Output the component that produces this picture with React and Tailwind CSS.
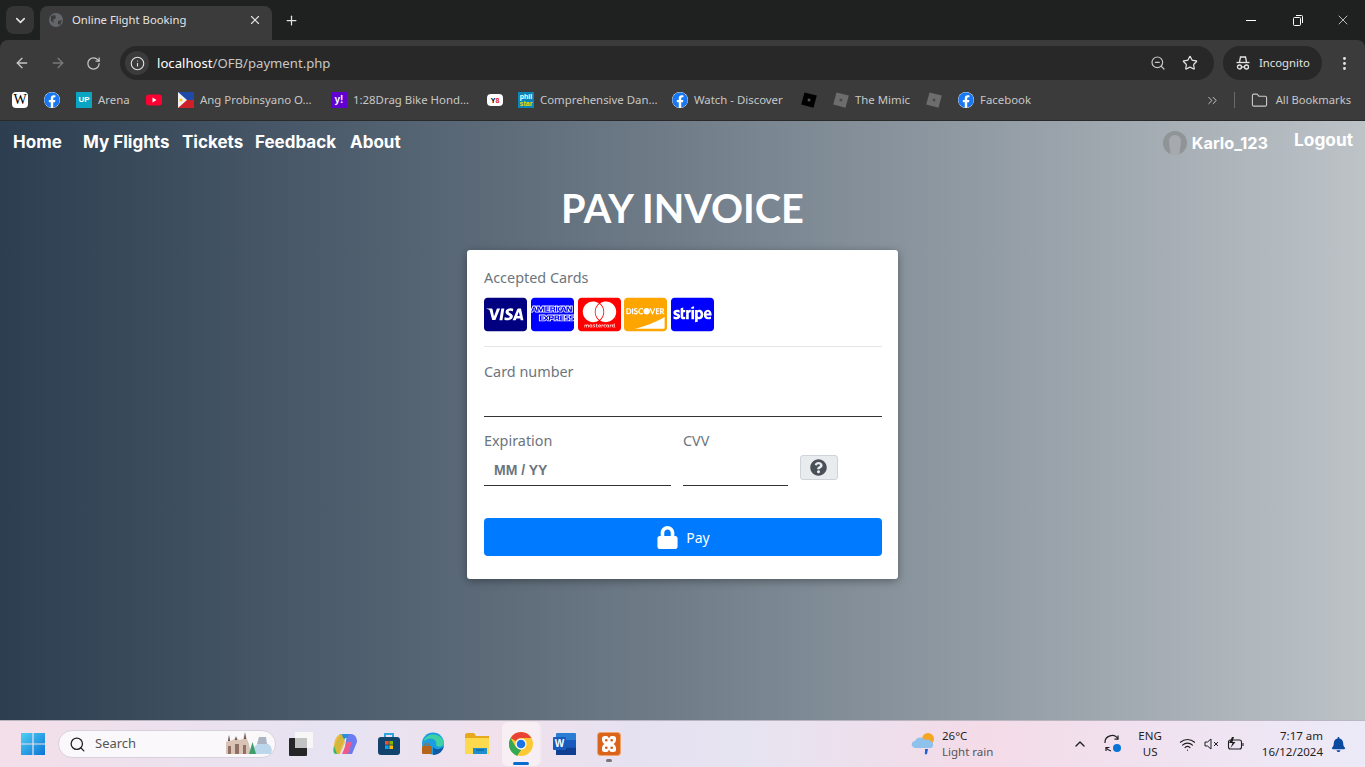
import {
  ArrowLeft,
  ArrowRight,
  ChevronDown,
  ChevronUp,
  ChevronsRight,
  EllipsisVertical,
  Folder,
  Info,
  Plus,
  RotateCw,
  Search,
  Star,
  Wifi,
  X,
  ZoomOut,
} from "lucide-react";
import {
  FaBell,
  FaCcAmex,
  FaCcDiscover,
  FaCcMastercard,
  FaCcStripe,
  FaCcVisa,
  FaFacebook,
  FaLock,
  FaQuestionCircle,
} from "react-icons/fa";

const uiFont = "font-['Noto_Sans','Open_Sans',sans-serif]";

/* ---------- browser chrome ---------- */

const Favicon = ({ type }) => {
  if (type === "wiki")
    return (
      <div className="flex h-4 w-4 items-center justify-center rounded-sm bg-white font-['Liberation_Serif',serif] text-[14px] leading-none text-black">
        W
      </div>
    );
  if (type === "fb") return <FaFacebook className="h-4 w-4 rounded-full bg-white text-[#1877f2]" />;
  if (type === "up")
    return (
      <div className="flex h-4 w-4 items-center justify-center bg-[#0aa5c0] font-['Liberation_Sans',sans-serif] text-[8px] font-bold leading-none text-white">
        UP
      </div>
    );
  if (type === "yt")
    return (
      <svg viewBox="0 0 16 16" className="h-4 w-4">
        <rect y="2.5" width="16" height="11" rx="3" fill="#ff0033" />
        <path d="M6.5 5.5 L10.5 8 L6.5 10.5 Z" fill="#fff" />
      </svg>
    );
  if (type === "ph")
    return (
      <svg viewBox="0 0 16 16" className="h-4 w-4">
        <rect width="16" height="8" fill="#1f4aa8" />
        <rect y="8" width="16" height="8" fill="#ce2028" />
        <path d="M0 0 L9 8 L0 16 Z" fill="#f2f2f2" />
        <circle cx="3" cy="8" r="1.5" fill="#f5c518" />
      </svg>
    );
  if (type === "yahoo")
    return (
      <div className="flex h-4 w-4 items-center justify-center bg-[#6001d2] font-['Liberation_Sans',sans-serif] text-[10px] font-bold leading-none text-white">
        y!
      </div>
    );
  if (type === "v8")
    return (
      <div className="flex h-3 w-4 items-center justify-center rounded-sm bg-white font-['Liberation_Sans',sans-serif] text-[7px] font-bold leading-none text-black">
        Y<span className="text-[#e01b24]">8</span>
      </div>
    );
  if (type === "phil")
    return (
      <div className="flex h-4 w-4 flex-col items-center justify-center bg-[#0b84b8] font-['Liberation_Sans',sans-serif] text-[7px] font-bold leading-[7px]">
        <span className="text-white">phil</span>
        <span className="text-[#f6d30b]">star</span>
      </div>
    );
  if (type === "roblox")
    return (
      <svg viewBox="0 0 16 16" className="h-4 w-4">
        <path d="M3.5 0.5 L15.8 3.5 L12.5 15.8 L0.2 12.5 Z" fill="#000" />
        <rect x="6.7" y="6.7" width="2.6" height="2.6" fill="#555" />
      </svg>
    );
  return (
    <svg viewBox="0 0 16 16" className="h-4 w-4">
      <path d="M3.5 0.5 L15.8 3.5 L12.5 15.8 L0.2 12.5 Z" fill="#6d6d6d" />
      <rect x="6.7" y="6.7" width="2.6" height="2.6" fill="#4a4a4a" />
    </svg>
  );
};

const bookmarks = [
  { icon: "wiki", width: "w-8" },
  { icon: "fb", width: "w-8" },
  { icon: "up", label: "Arena", width: "w-[70px]" },
  { icon: "yt", width: "w-8" },
  { icon: "ph", label: "Ang Probinsyano O...", width: "w-[153px]" },
  { icon: "yahoo", label: "1:28Drag Bike Hond...", width: "w-[156px]" },
  { icon: "v8", width: "w-[31px]" },
  { icon: "phil", label: "Comprehensive Dan...", width: "w-[154px]" },
  { icon: "fb", label: "Watch - Discover", width: "w-[129px]" },
  { icon: "roblox", width: "w-8" },
  { icon: "gray", label: "The Mimic", width: "w-[93px]" },
  { icon: "gray", width: "w-8" },
  { icon: "fb", label: "Facebook", width: "w-[93px]" },
];

const TabStrip = () => (
  <div className="flex h-10 shrink-0 items-start bg-[#1f2120] pl-[6px] pt-[6px] text-[#e3e3e3]">
    <div className="flex h-7 w-7 items-center justify-center rounded-lg bg-[#353535]">
      <ChevronDown size={15} strokeWidth={2.5} />
    </div>
    <div className="ml-[6px] flex h-[34px] w-[232px] items-start rounded-t-lg bg-[#3b3b3b] pl-2 pr-[10px] pt-[6px]">
      <svg viewBox="0 0 16 16" className="h-4 w-4 shrink-0">
        <circle cx="8" cy="8" r="7" fill="#63666a" />
        <path d="M3 4 L7 3 L8 6 L5 8 L6 11 L3 9 Z M10 9 L14 8 L12 13 L10 12 Z" fill="#3b3b3b" />
      </svg>
      <span className="ml-2 flex-1 text-[11.3px] leading-4 text-[#e3e3e3]">Online Flight Booking</span>
      <X size={14} strokeWidth={2} className="mt-[1px]" />
    </div>
    <div className="ml-[12px] flex h-7 items-center">
      <Plus size={15} strokeWidth={2} />
    </div>
    <div className="ml-auto mt-[-6px] flex h-10 items-center">
      <div className="flex w-[46px] justify-center">
        <div className="h-px w-[10px] bg-white" />
      </div>
      <div className="flex w-[47px] justify-center">
        <svg viewBox="0 0 12 12" className="h-3 w-3" fill="none" stroke="#fff" strokeWidth="1">
          <rect x="1.5" y="3.5" width="7" height="8" rx="1" />
          <path d="M4 1.5 H9.5 A1 1 0 0 1 10.5 2.5 V9" />
        </svg>
      </div>
      <div className="flex w-[44px] justify-center">
        <X size={16} strokeWidth={1.2} />
      </div>
    </div>
  </div>
);

const IncognitoIcon = () => (
  <svg viewBox="0 0 16 16" className="h-4 w-4" fill="none" stroke="#e3e3e3" strokeWidth="1.3">
    <path d="M4.5 7 L5.5 2 H10.5 L11.5 7" />
    <path d="M1.5 7.5 H14.5" />
    <circle cx="4.5" cy="12" r="2" />
    <circle cx="11.5" cy="12" r="2" />
    <path d="M6.5 12 H9.5" />
  </svg>
);

const Toolbar = () => (
  <div className="flex h-10 shrink-0 items-center rounded-t-lg bg-[#3b3b3b] pt-[6px] text-[#c7c7c7]">
    <div className="flex w-[120px] shrink-0 items-center pl-[14px]">
      <ArrowLeft size={16} strokeWidth={2} />
      <ArrowRight size={16} strokeWidth={2} className="ml-5 text-[#7a7a7a]" />
      <RotateCw size={15} strokeWidth={2} className="ml-[20px]" />
    </div>
    <div className="flex h-[34px] w-[1094px] shrink-0 items-center rounded-full bg-[#282828] pl-[5px] pr-[16px]">
      <div className="flex h-6 w-6 items-center justify-center rounded-full bg-[#3b3b3b]">
        <Info size={15} strokeWidth={1.8} className="text-[#e3e3e3]" />
      </div>
      <span className="ml-2 mt-[2px] flex-1 text-[13.15px] text-[#c7c7c7]">
        <span className="text-white">localhost</span>/OFB/payment.php
      </span>
      <ZoomOut size={16} strokeWidth={1.8} />
      <Star size={16} strokeWidth={1.8} className="ml-4 text-[#e3e3e3]" />
    </div>
    <div className="ml-[9px] flex h-[34px] w-[99px] shrink-0 items-center rounded-full bg-[#282828] pl-[12px]">
      <IncognitoIcon />
      <span className="ml-2 text-[11.3px] text-[#e3e3e3]">Incognito</span>
    </div>
    <EllipsisVertical size={17} strokeWidth={2.2} className="ml-[14px] text-[#e3e3e3]" />
  </div>
);

const BookmarksBar = () => (
  <div className="flex h-[41px] shrink-0 items-center border-b border-[#2a2a2a] bg-[#3b3b3b] pl-3 text-[11.4px] text-[#c7c7c7]">
    {bookmarks.map((item, i) => (
      <div key={i} className={`flex shrink-0 items-center gap-[6px] ${item.width}`}>
        <Favicon type={item.icon} />
        {item.label && <span className="whitespace-nowrap">{item.label}</span>}
      </div>
    ))}
    <div className="ml-auto flex items-center pr-[14px]">
      <ChevronsRight size={15} strokeWidth={1.6} />
      <div className="ml-[14px] h-4 w-px bg-[#6a6a6a]" />
      <Folder size={17} strokeWidth={1.6} className="ml-4" />
      <span className="ml-2 whitespace-nowrap text-[11.2px]">All Bookmarks</span>
    </div>
  </div>
);

/* ---------- page ---------- */

const NavBar = () => (
  <nav className="flex h-[44px] items-center pl-[13px] pr-3 font-['Inter',sans-serif] text-[17px] font-bold text-white">
    <a className="w-[50px]">Home</a>
    <a className="ml-5 w-[87px]">My Flights</a>
    <a className="ml-3 w-[60px] whitespace-nowrap">Tickets</a>
    <a className="ml-[13px] w-[82px]">Feedback</a>
    <a className="ml-[13px]">About</a>
    <div className="ml-auto flex items-center">
      <svg viewBox="0 0 24 24" className="h-6 w-6">
        <circle cx="12" cy="12" r="12" fill="#8f9497" />
        <circle cx="12" cy="10" r="6" fill="#a6aaae" />
        <path d="M6 10 C6 16 8 18 7 24 H17 C16 18 18 16 18 10 Z" fill="#a6aaae" />
      </svg>
      <span className="ml-[5px] text-[16.3px]">Karlo_123</span>
      <span className="ml-[26px] mb-[6px] text-[17.3px]">Logout</span>
    </div>
  </nav>
);

const cardIcons = [
  { Icon: FaCcVisa, color: "text-[#000080]" },
  { Icon: FaCcAmex, color: "text-[#0000ff]" },
  { Icon: FaCcMastercard, color: "text-[#ff0000]" },
  { Icon: FaCcDiscover, color: "text-[#ffa500]" },
  { Icon: FaCcStripe, color: "text-[#0000ff]" },
];

const PaymentCard = () => (
  <div className="mx-auto mt-[18px] w-[431px] rounded-[3px] bg-white pb-[23px] pl-[17px] pr-4 pt-[17px] text-[14.4px] text-[#6c757d] shadow-[0_2px_8px_rgba(0,0,0,0.35)]">
    <p className="leading-[22px]">Accepted Cards</p>
    <div className="mt-[6px] flex h-[38px] items-center gap-[3.75px]">
      {cardIcons.map(({ Icon, color }, i) => (
        <Icon key={i} size={43} className={`shrink-0 ${color}`} />
      ))}
    </div>
    <hr className="mt-[13px] border-[#e5e7ea]" />
    <p className="mt-[14px] leading-[22px]">Card number</p>
    <div className="mt-[33px] border-b border-[#333]" />

    <div className="mt-[13px] flex items-start">
      <div className="w-[187px]">
        <p className="leading-[22px]">Expiration</p>
        <div className="h-[34px] border-b border-[#333] pl-[10px] pt-2 font-['Liberation_Sans',sans-serif] text-sm font-bold leading-5 text-[#6c757d]">
          MM / YY
        </div>
      </div>
      <div className="ml-3 w-[105px]">
        <p className="leading-[22px]">CVV</p>
        <div className="h-[34px] border-b border-[#333]" />
      </div>
      <button
        type="button"
        className="ml-3 mt-[25px] flex h-[25px] w-[38px] items-center justify-center rounded-[3px] border border-[#ced4da] bg-[#e9ecef] pr-[2px] text-[#495057]"
      >
        <FaQuestionCircle size={17} />
      </button>
    </div>

    <button
      type="button"
      className="mt-8 flex h-[38px] w-full items-center justify-center gap-[7px] rounded bg-[#007bff] text-[14px] text-white"
    >
      <FaLock size={23} />
      <span>Pay</span>
    </button>
  </div>
);

/* ---------- taskbar ---------- */

const WindowsLogo = () => (
  <svg viewBox="0 0 24 24" className="h-6 w-6">
    <defs>
      <linearGradient id="win" x1="0" y1="0" x2="1" y2="1">
        <stop offset="0" stopColor="#4fd0f5" />
        <stop offset="1" stopColor="#0a74d6" />
      </linearGradient>
    </defs>
    <path d="M0 1 H11.4 V11.4 H0 Z M12.6 1 H24 V11.4 H12.6 Z M0 12.6 H11.4 V23 H0 Z M12.6 12.6 H24 V23 H12.6 Z" fill="url(#win)" />
  </svg>
);

const SearchArt = () => (
  <svg viewBox="0 0 48 24" className="h-6 w-12">
    <path d="M1 22 V10 L3 9 L4 3 L5 9 L8 8 L11 5 L14 8 L18 7 L20 1 L22 7 L24 12 L26 22 Z" fill="#d9c3b4" />
    <path d="M3 9 L4 3 L5 9 Z M10 8 L11 4 L12 8 Z M19 7 L20 0 L21 7 Z" fill="#5d4a4a" />
    <path d="M3 22 V14 H6 V22 Z M10 22 V12 H14 V22 Z M18 22 V13 H21 V22 Z" fill="#8f6f66" />
    <path d="M28 22 C27 14 33 10 40 11 C46 12 48 17 46 22 Z" fill="#bcd7ec" />
    <path d="M32 12 L34 5 H41 L42 12 Z" fill="#aab4c2" />
    <path d="M28 22 L24 22 L27.5 10 L31 22 Z" fill="#3f9c6b" />
  </svg>
);

const TaskView = () => (
  <svg viewBox="0 0 24 24" className="h-6 w-6">
    <rect x="0" y="6" width="18" height="18" rx="1" fill="#262626" />
    <rect x="6" y="0" width="18" height="16" rx="1" fill="#f7f7f7" />
    <rect x="6" y="6" width="12" height="10" fill="#c2c2c2" />
  </svg>
);

const Copilot = () => (
  <svg viewBox="0 0 24 24" className="h-6 w-6">
    <path d="M7 2 H14 L9 13 L6 22 H3 C0 22 0 18 1 14 Z" fill="#37b36f" />
    <path d="M1 14 C1 8 4 2 9 2 L12 10 L7 22 H4 Z" fill="#f2b632" opacity="0.85" />
    <path d="M14 2 H18 C22 2 24 6 24 10 L19 22 H11 Z" fill="#6d7bf0" />
    <path d="M9 22 L14 10 H19 L15 22 Z" fill="#ee5a8a" />
    <path d="M9 2 H16 L14 6 H10 Z" fill="#2b8fe0" />
  </svg>
);

const StoreIcon = () => (
  <svg viewBox="0 0 24 24" className="h-6 w-6">
    <path d="M8 6 V2 H16 V6" fill="none" stroke="#2fa5e0" strokeWidth="2" />
    <rect x="1" y="5" width="22" height="18" rx="3" fill="#12436d" />
    <rect x="8" y="9" width="3.6" height="3.6" fill="#f25022" />
    <rect x="12.4" y="9" width="3.6" height="3.6" fill="#7fba00" />
    <rect x="8" y="13.4" width="3.6" height="3.6" fill="#00a4ef" />
    <rect x="12.4" y="13.4" width="3.6" height="3.6" fill="#ffb900" />
  </svg>
);

const EdgeIcon = () => (
  <svg viewBox="0 0 24 24" className="h-6 w-6">
    <circle cx="12" cy="11.5" r="11" fill="#1b9de2" />
    <path d="M3 8 C6 1 19 0 23 10 C23 15 17 16 15 13 C17 9 11 5 7 7 C4 8 3 10 3 8 Z" fill="#3fd0a4" />
    <path d="M12 23 C18 23 22 19 23 14 C20 18 14 18 12 15 Z" fill="#0c59a4" />
    <rect x="1" y="14" width="10" height="8" rx="1" fill="#b6651c" />
    <rect x="4" y="12" width="4" height="3" fill="none" stroke="#b6651c" strokeWidth="1" />
  </svg>
);

const FilesIcon = () => (
  <svg viewBox="0 0 24 24" className="h-6 w-6">
    <path d="M0 3 C0 2 1 1 2 1 H9 L11 4 H24 V22 H0 Z" fill="#e7a91c" />
    <rect x="0" y="6" width="24" height="16" rx="1" fill="#fdd94e" />
    <rect x="8" y="16" width="14" height="6" fill="#1f8fd0" />
    <rect x="11" y="17.5" width="8" height="1.2" fill="#0c5f99" />
  </svg>
);

const ChromeIcon = () => (
  <svg viewBox="0 0 24 24" className="h-6 w-6">
    <circle cx="12" cy="12" r="12" fill="#fcc934" />
    <path d="M12 0 A12 12 0 0 1 22.4 6 H12 A6 6 0 0 0 6.8 9 L1.6 6 A12 12 0 0 1 12 0 Z" fill="#ea4335" />
    <path d="M1.6 6 L6.8 15 A6 6 0 0 0 12 18 L6.8 23 A12 12 0 0 1 1.6 6 Z" fill="#34a853" />
    <path d="M6.8 15 L12 18 L8 24 L5 22 Z" fill="#34a853" />
    <circle cx="12" cy="12" r="5.5" fill="#fff" />
    <circle cx="12" cy="12" r="4.3" fill="#1a73e8" />
  </svg>
);

const WordIcon = () => (
  <div className="relative h-6 w-6">
    <svg viewBox="0 0 24 24" className="h-6 w-6">
      <rect x="3" y="1" width="20" height="22" rx="1" fill="#2b7cd3" />
      <rect x="3" y="8" width="20" height="7.5" fill="#185abd" />
      <rect x="3" y="15.5" width="20" height="7.5" fill="#103f91" />
    </svg>
    <span className="absolute left-0 top-[5px] flex h-[13px] w-[13px] items-center justify-center rounded-[1px] bg-[#185abd] font-['Liberation_Sans',sans-serif] text-[10px] font-bold leading-none text-white">
      W
    </span>
  </div>
);

const XamppIcon = () => (
  <svg viewBox="0 0 24 24" className="h-6 w-6">
    <rect x="0.5" y="0.5" width="23" height="23" rx="3" fill="#d9641a" stroke="#f2a36a" strokeWidth="1" />
    <path d="M5 6.5 A2.5 2.5 0 0 1 7.5 4 H9.5 C11 4 11.5 5.5 12 6.5 C12.5 5.5 13 4 14.5 4 H16.5 A2.5 2.5 0 0 1 19 6.5 V8 C19 9.5 18 11 16.5 12 C18 13 19 14.5 19 16 V17.5 A2.5 2.5 0 0 1 16.5 20 H14.5 C13 20 12.5 18.5 12 17.5 C11.5 18.5 11 20 9.5 20 H7.5 A2.5 2.5 0 0 1 5 17.5 V16 C5 14.5 6 13 7.5 12 C6 11 5 9.5 5 8 Z" fill="#fff" />
    <rect x="8" y="7" width="2.6" height="2.6" rx="1" fill="#d9641a" />
    <rect x="13.4" y="7" width="2.6" height="2.6" rx="1" fill="#d9641a" />
    <rect x="8" y="14.4" width="2.6" height="2.6" rx="1" fill="#d9641a" />
    <rect x="13.4" y="14.4" width="2.6" height="2.6" rx="1" fill="#d9641a" />
  </svg>
);

const WeatherIcon = () => (
  <svg viewBox="0 0 26 24" className="h-6 w-[26px]">
    <circle cx="18" cy="7" r="6" fill="#f5a623" />
    <path d="M6 16 C1 16 0 10 5 9 C7 4 14 5 15 8 C20 7 24 10 23 14 C22 16 21 16 20 16 Z" fill="#8ec1ec" />
    <path d="M15 17 H18 L17 22 C16 23 14 22 15 20 Z" fill="#1f5fd0" />
  </svg>
);

const SyncIcon = () => (
  <svg viewBox="0 0 20 20" className="h-5 w-5" fill="none" stroke="#1f1f1f" strokeWidth="1.2">
    <path d="M2 9 A7 7 0 0 1 15 5" />
    <path d="M15 1.5 V5.2 H11.5" />
    <path d="M3 17 V13.5 H6.5" />
    <path d="M3 13.5 A7 7 0 0 0 8 17" />
    <circle cx="14" cy="14" r="4" fill="#0a74d6" stroke="none" />
  </svg>
);

const MuteIcon = () => (
  <svg viewBox="0 0 16 16" className="h-4 w-4" fill="none" stroke="#1f1f1f" strokeWidth="1">
    <path d="M1 6 H3.5 L7 3 V13 L3.5 10 H1 Z" />
    <path d="M10 6 L14 10 M14 6 L10 10" />
  </svg>
);

const BatteryIcon = () => (
  <svg viewBox="0 0 18 16" className="h-4 w-[18px]" fill="none" stroke="#1f1f1f" strokeWidth="1.1">
    <rect x="1.5" y="4" width="13" height="9" rx="2" />
    <path d="M16 7 V10" />
    <path d="M5 1 L2 7 H5.5 L3.5 12 L8.5 6 H5.5 L7 1 Z" fill="#1f1f1f" stroke="none" />
  </svg>
);

const taskIcons = [TaskView, Copilot, StoreIcon, EdgeIcon, FilesIcon];

const Taskbar = () => (
  <div className="flex h-[47px] shrink-0 items-center border-t border-[#b9b6c2] bg-[linear-gradient(90deg,#f3dfe9_0%,#e6e3f2_25%,#f1e1ec_37%,#e6e1f1_46%,#e7e4f1_55%,#f4dbe8_72%,#eceaf8_100%)] pl-[21px] text-[#1f1f1f]">
    <WindowsLogo />
    <div className="ml-[13px] flex h-7 w-[218px] items-center rounded-full border border-[#d6d2dd] bg-[#faf8fb] pl-[10px] pr-[2px]">
      <Search size={17} strokeWidth={1.8} />
      <span className="ml-[9px] flex-1 text-[13px] text-[#555]">Search</span>
      <SearchArt />
    </div>
    <div className="ml-[3px] flex items-center">
      {taskIcons.map((Icon, i) => (
        <div key={i} className="flex w-[44px] justify-center">
          <Icon />
        </div>
      ))}
      <div className="relative ml-[3px] flex h-[44px] w-[38px] items-center justify-center rounded-md bg-[#f8eff4] shadow-[2px_0_0_#efe6ee]">
        <ChromeIcon />
        <div className="absolute bottom-[1px] h-[3px] w-4 rounded-full bg-[#0a6ccf]" />
      </div>
      <div className="ml-[6px] flex w-[38px] justify-center">
        <WordIcon />
      </div>
      <div className="relative ml-[6px] flex w-[38px] justify-center">
        <XamppIcon />
        <div className="absolute bottom-[-6px] h-[3px] w-[6px] rounded-full bg-[#777]" />
      </div>
    </div>

    <div className="ml-[282px] flex items-center">
      <WeatherIcon />
      <div className="ml-[6px] text-[11.5px] leading-[16px]">
        <div>26°C</div>
        <div className="text-[#555]">Light rain</div>
      </div>
    </div>
    <ChevronUp size={16} strokeWidth={2} className="ml-[79px]" />
    <div className="ml-[15px]">
      <SyncIcon />
    </div>
    <div className="ml-[15px] text-center text-[11.5px] leading-[16px]">
      <div>ENG</div>
      <div>US</div>
    </div>
    <Wifi size={17} strokeWidth={1.6} className="ml-[17px]" />
    <div className="ml-[8px]">
      <MuteIcon />
    </div>
    <div className="ml-[7px]">
      <BatteryIcon />
    </div>
    <div className="ml-auto text-right text-[11.5px] leading-[16px]">
      <div>7:17 am</div>
      <div>16/12/2024</div>
    </div>
    <FaBell size={15} className="ml-[8px] mr-[19px] text-[#0b4a9e]" />
  </div>
);

const App = () => (
  <div className={`flex h-[767px] w-full flex-col overflow-hidden bg-[#1f2120] ${uiFont}`}>
    <TabStrip />
    <Toolbar />
    <BookmarksBar />
    <main className="flex-1 bg-gradient-to-r from-[#2c3e50] to-[#bdc3c7]">
      <NavBar />
      <h1 className="mt-[19px] text-center font-['Lato',sans-serif] text-[39.7px] font-bold leading-[48px] text-white">
        PAY INVOICE
      </h1>
      <PaymentCard />
    </main>
    <Taskbar />
  </div>
);

export default App;
